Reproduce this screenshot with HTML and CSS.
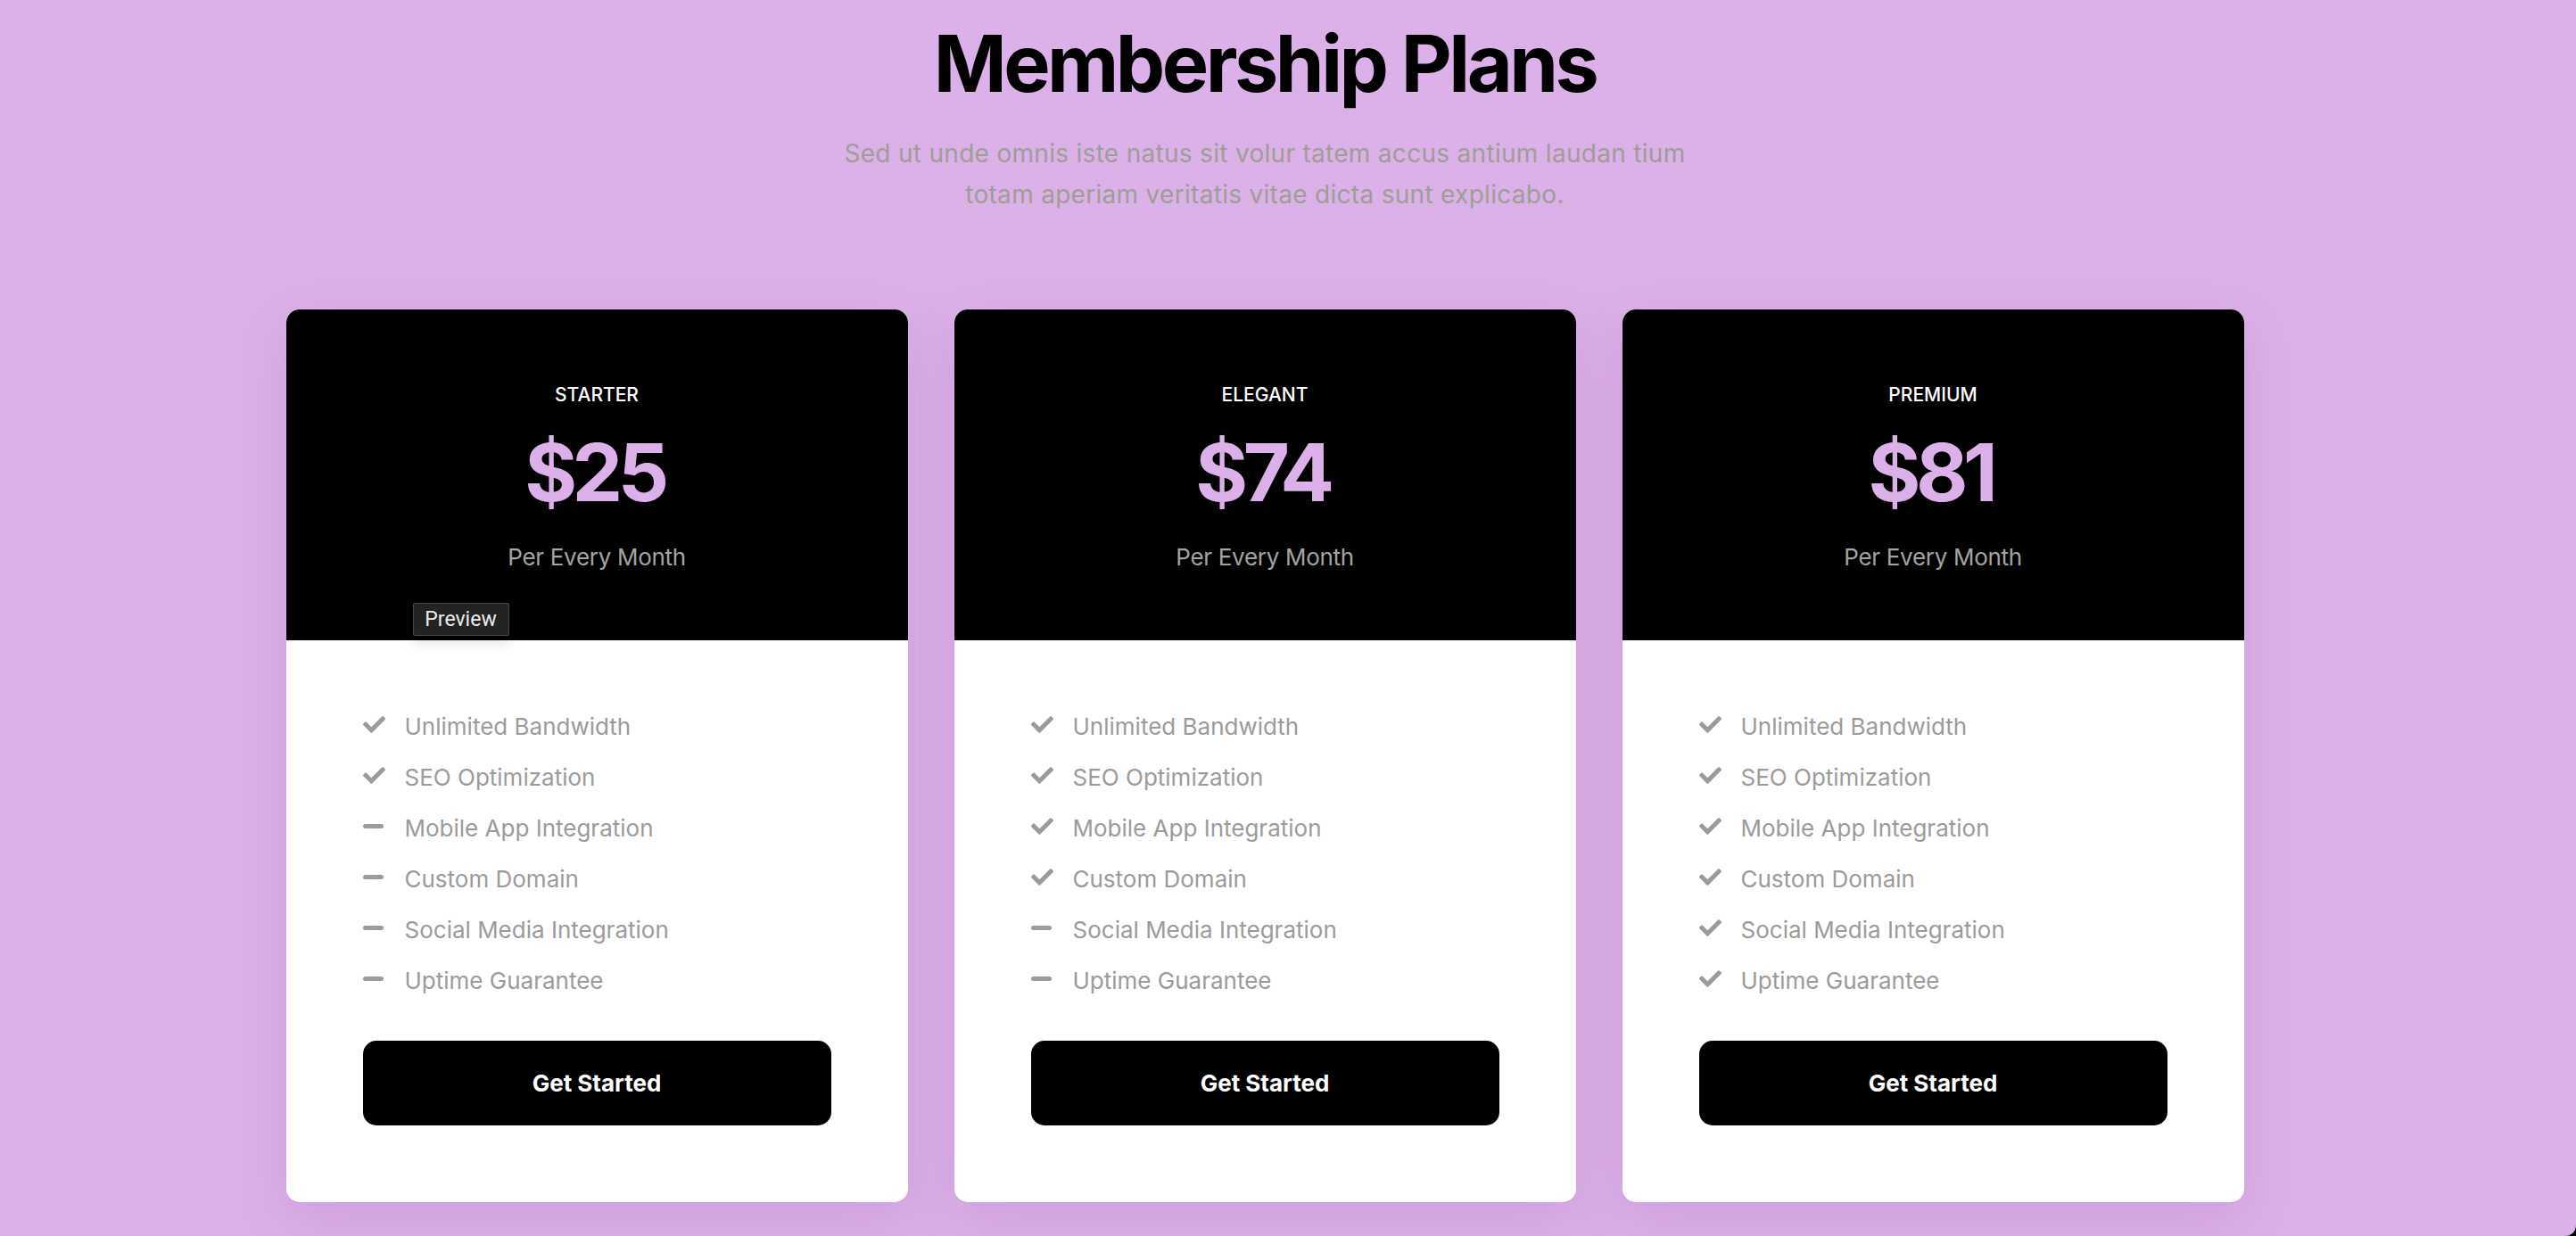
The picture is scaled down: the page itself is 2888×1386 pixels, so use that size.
FILE: index.html
```html
<!DOCTYPE html>
<html lang="en">
<head>
<meta charset="utf-8">
<title>Membership Plans</title>
<link rel="stylesheet" href="styles.css">
</head>
<body>
<section class="pricing">
  <div class="inner">
    <h1 class="title">Membership Plans</h1>
    <p class="subtitle">Sed ut unde omnis iste natus sit volur tatem accus antium laudan tium<br>totam aperiam veritatis vitae dicta sunt explicabo.</p>
    <div class="cards">
      <div class="card">
        <div class="card-head">
          <div class="plan">STARTER</div>
          <div class="price">$25</div>
          <div class="period">Per Every Month</div>
        </div>
        <div class="tooltip">Preview</div>
        <div class="card-body">
          <ul class="features">
            <li><span class="ico"><svg class="check" viewBox="0 64 512 384"><path d="M173.898 439.404l-166.4-166.4c-9.997-9.997-9.997-26.206 0-36.204l36.203-36.204c9.997-9.998 26.207-9.998 36.204 0L192 312.690 432.095 72.596c9.997-9.997 26.207-9.997 36.204 0l36.203 36.204c9.997 9.997 9.997 26.206 0 36.204l-294.4 294.401c-9.998 9.997-26.207 9.997-36.204-.001z"/></svg></span>Unlimited Bandwidth</li>
            <li><span class="ico"><svg class="check" viewBox="0 64 512 384"><path d="M173.898 439.404l-166.4-166.4c-9.997-9.997-9.997-26.206 0-36.204l36.203-36.204c9.997-9.998 26.207-9.998 36.204 0L192 312.690 432.095 72.596c9.997-9.997 26.207-9.997 36.204 0l36.203 36.204c9.997 9.997 9.997 26.206 0 36.204l-294.4 294.401c-9.998 9.997-26.207 9.997-36.204-.001z"/></svg></span>SEO Optimization</li>
            <li><span class="ico"><span class="dash"></span></span>Mobile App Integration</li>
            <li><span class="ico"><span class="dash"></span></span>Custom Domain</li>
            <li><span class="ico"><span class="dash"></span></span>Social Media Integration</li>
            <li><span class="ico"><span class="dash"></span></span>Uptime Guarantee</li>
          </ul>
          <a class="btn" href="#">Get Started</a>
        </div>
      </div>
      <div class="card">
        <div class="card-head">
          <div class="plan">ELEGANT</div>
          <div class="price">$74</div>
          <div class="period">Per Every Month</div>
        </div>
        <div class="card-body">
          <ul class="features">
            <li><span class="ico"><svg class="check" viewBox="0 64 512 384"><path d="M173.898 439.404l-166.4-166.4c-9.997-9.997-9.997-26.206 0-36.204l36.203-36.204c9.997-9.998 26.207-9.998 36.204 0L192 312.690 432.095 72.596c9.997-9.997 26.207-9.997 36.204 0l36.203 36.204c9.997 9.997 9.997 26.206 0 36.204l-294.4 294.401c-9.998 9.997-26.207 9.997-36.204-.001z"/></svg></span>Unlimited Bandwidth</li>
            <li><span class="ico"><svg class="check" viewBox="0 64 512 384"><path d="M173.898 439.404l-166.4-166.4c-9.997-9.997-9.997-26.206 0-36.204l36.203-36.204c9.997-9.998 26.207-9.998 36.204 0L192 312.690 432.095 72.596c9.997-9.997 26.207-9.997 36.204 0l36.203 36.204c9.997 9.997 9.997 26.206 0 36.204l-294.4 294.401c-9.998 9.997-26.207 9.997-36.204-.001z"/></svg></span>SEO Optimization</li>
            <li><span class="ico"><svg class="check" viewBox="0 64 512 384"><path d="M173.898 439.404l-166.4-166.4c-9.997-9.997-9.997-26.206 0-36.204l36.203-36.204c9.997-9.998 26.207-9.998 36.204 0L192 312.690 432.095 72.596c9.997-9.997 26.207-9.997 36.204 0l36.203 36.204c9.997 9.997 9.997 26.206 0 36.204l-294.4 294.401c-9.998 9.997-26.207 9.997-36.204-.001z"/></svg></span>Mobile App Integration</li>
            <li><span class="ico"><svg class="check" viewBox="0 64 512 384"><path d="M173.898 439.404l-166.4-166.4c-9.997-9.997-9.997-26.206 0-36.204l36.203-36.204c9.997-9.998 26.207-9.998 36.204 0L192 312.690 432.095 72.596c9.997-9.997 26.207-9.997 36.204 0l36.203 36.204c9.997 9.997 9.997 26.206 0 36.204l-294.4 294.401c-9.998 9.997-26.207 9.997-36.204-.001z"/></svg></span>Custom Domain</li>
            <li><span class="ico"><span class="dash"></span></span>Social Media Integration</li>
            <li><span class="ico"><span class="dash"></span></span>Uptime Guarantee</li>
          </ul>
          <a class="btn" href="#">Get Started</a>
        </div>
      </div>
      <div class="card">
        <div class="card-head">
          <div class="plan">PREMIUM</div>
          <div class="price">$81</div>
          <div class="period">Per Every Month</div>
        </div>
        <div class="card-body">
          <ul class="features">
            <li><span class="ico"><svg class="check" viewBox="0 64 512 384"><path d="M173.898 439.404l-166.4-166.4c-9.997-9.997-9.997-26.206 0-36.204l36.203-36.204c9.997-9.998 26.207-9.998 36.204 0L192 312.690 432.095 72.596c9.997-9.997 26.207-9.997 36.204 0l36.203 36.204c9.997 9.997 9.997 26.206 0 36.204l-294.4 294.401c-9.998 9.997-26.207 9.997-36.204-.001z"/></svg></span>Unlimited Bandwidth</li>
            <li><span class="ico"><svg class="check" viewBox="0 64 512 384"><path d="M173.898 439.404l-166.4-166.4c-9.997-9.997-9.997-26.206 0-36.204l36.203-36.204c9.997-9.998 26.207-9.998 36.204 0L192 312.690 432.095 72.596c9.997-9.997 26.207-9.997 36.204 0l36.203 36.204c9.997 9.997 9.997 26.206 0 36.204l-294.4 294.401c-9.998 9.997-26.207 9.997-36.204-.001z"/></svg></span>SEO Optimization</li>
            <li><span class="ico"><svg class="check" viewBox="0 64 512 384"><path d="M173.898 439.404l-166.4-166.4c-9.997-9.997-9.997-26.206 0-36.204l36.203-36.204c9.997-9.998 26.207-9.998 36.204 0L192 312.690 432.095 72.596c9.997-9.997 26.207-9.997 36.204 0l36.203 36.204c9.997 9.997 9.997 26.206 0 36.204l-294.4 294.401c-9.998 9.997-26.207 9.997-36.204-.001z"/></svg></span>Mobile App Integration</li>
            <li><span class="ico"><svg class="check" viewBox="0 64 512 384"><path d="M173.898 439.404l-166.4-166.4c-9.997-9.997-9.997-26.206 0-36.204l36.203-36.204c9.997-9.998 26.207-9.998 36.204 0L192 312.690 432.095 72.596c9.997-9.997 26.207-9.997 36.204 0l36.203 36.204c9.997 9.997 9.997 26.206 0 36.204l-294.4 294.401c-9.998 9.997-26.207 9.997-36.204-.001z"/></svg></span>Custom Domain</li>
            <li><span class="ico"><svg class="check" viewBox="0 64 512 384"><path d="M173.898 439.404l-166.4-166.4c-9.997-9.997-9.997-26.206 0-36.204l36.203-36.204c9.997-9.998 26.207-9.998 36.204 0L192 312.690 432.095 72.596c9.997-9.997 26.207-9.997 36.204 0l36.203 36.204c9.997 9.997 9.997 26.206 0 36.204l-294.4 294.401c-9.998 9.997-26.207 9.997-36.204-.001z"/></svg></span>Social Media Integration</li>
            <li><span class="ico"><svg class="check" viewBox="0 64 512 384"><path d="M173.898 439.404l-166.4-166.4c-9.997-9.997-9.997-26.206 0-36.204l36.203-36.204c9.997-9.998 26.207-9.998 36.204 0L192 312.690 432.095 72.596c9.997-9.997 26.207-9.997 36.204 0l36.203 36.204c9.997 9.997 9.997 26.206 0 36.204l-294.4 294.401c-9.998 9.997-26.207 9.997-36.204-.001z"/></svg></span>Uptime Guarantee</li>
          </ul>
          <a class="btn" href="#">Get Started</a>
        </div>
      </div>
    </div>
  </div>
</section>
</body>
</html>
```

FILE: styles.css
```css
* { box-sizing: border-box; }
html, body { margin: 0; padding: 0; }
body {
  background: #000;
  font-family: Inter, "Noto Sans", sans-serif;
  overflow: hidden;
}
.pricing {
  background: #dcb0e8;
  height: 1386px;
  width: 100%;
  border-bottom-right-radius: 12px;
  padding-right: 52px;
}
.inner {
  display: flex;
  flex-direction: column;
  align-items: center;
  padding-top: 21px;
}
.title {
  margin: 0;
  font-size: 88px;
  line-height: 100px;
  font-weight: 700;
  letter-spacing: -3.5px;
  color: #000;
}
.subtitle {
  margin: 28px 0 0;
  font-size: 28px;
  line-height: 46px;
  color: #9c9e97;
  text-align: center;
  letter-spacing: 0.3px;
}
.cards {
  margin-top: 106px;
  display: flex;
  gap: 52px;
}
.card {
  position: relative;
  width: 697px;
  height: 1001px;
  background: #fff;
  border-radius: 15px;
  overflow: hidden;
  box-shadow: 0 20px 60px rgba(150, 90, 170, 0.18);
}
.card-head {
  background: #000;
  height: 371px;
  padding-top: 81px;
  display: flex;
  flex-direction: column;
  align-items: center;
}
.plan {
  color: #fff;
  font-size: 21px;
  line-height: 30px;
  font-weight: 500;
}
.price {
  margin-top: 22px;
  color: #dcb0e8;
  font-size: 90px;
  line-height: 100px;
  font-weight: 700;
  letter-spacing: -5.5px;
  text-indent: -5px;
}
.period {
  margin-top: 27px;
  color: #a3a3a3;
  font-size: 26px;
  line-height: 36px;
  letter-spacing: -0.3px;
}
.tooltip {
  position: absolute;
  left: 142px;
  top: 329px;
  width: 108px;
  height: 37px;
  background: #232323;
  border: 1px solid #4a4a4a;
  border-radius: 2px;
  color: #ececec;
  font-family: Roboto, "Noto Sans", sans-serif;
  font-size: 23px;
  line-height: 35px;
  text-align: center;
  box-shadow: 0 8px 14px rgba(0, 0, 0, 0.12);
}
.card-body {
  padding: 68px 86px 0;
}
.features {
  list-style: none;
  margin: 0;
  padding: 0;
}
.features li {
  display: flex;
  align-items: center;
  height: 57px;
  font-size: 26px;
  color: #9b9b9b;
}
.ico {
  width: 47px;
  display: flex;
  align-items: center;
  padding-bottom: 4px;
}
.check {
  width: 25px;
  height: 19px;
  fill: #9b9b9b;
}
.dash {
  display: block;
  width: 23px;
  height: 5px;
  border-radius: 3px;
  background: #9b9b9b;
}
.btn {
  display: flex;
  align-items: center;
  justify-content: center;
  margin-top: 39px;
  height: 95px;
  border-radius: 15px;
  background: #000;
  color: #fff;
  text-decoration: none;
  font-size: 26px;
  font-weight: 700;
}
```
